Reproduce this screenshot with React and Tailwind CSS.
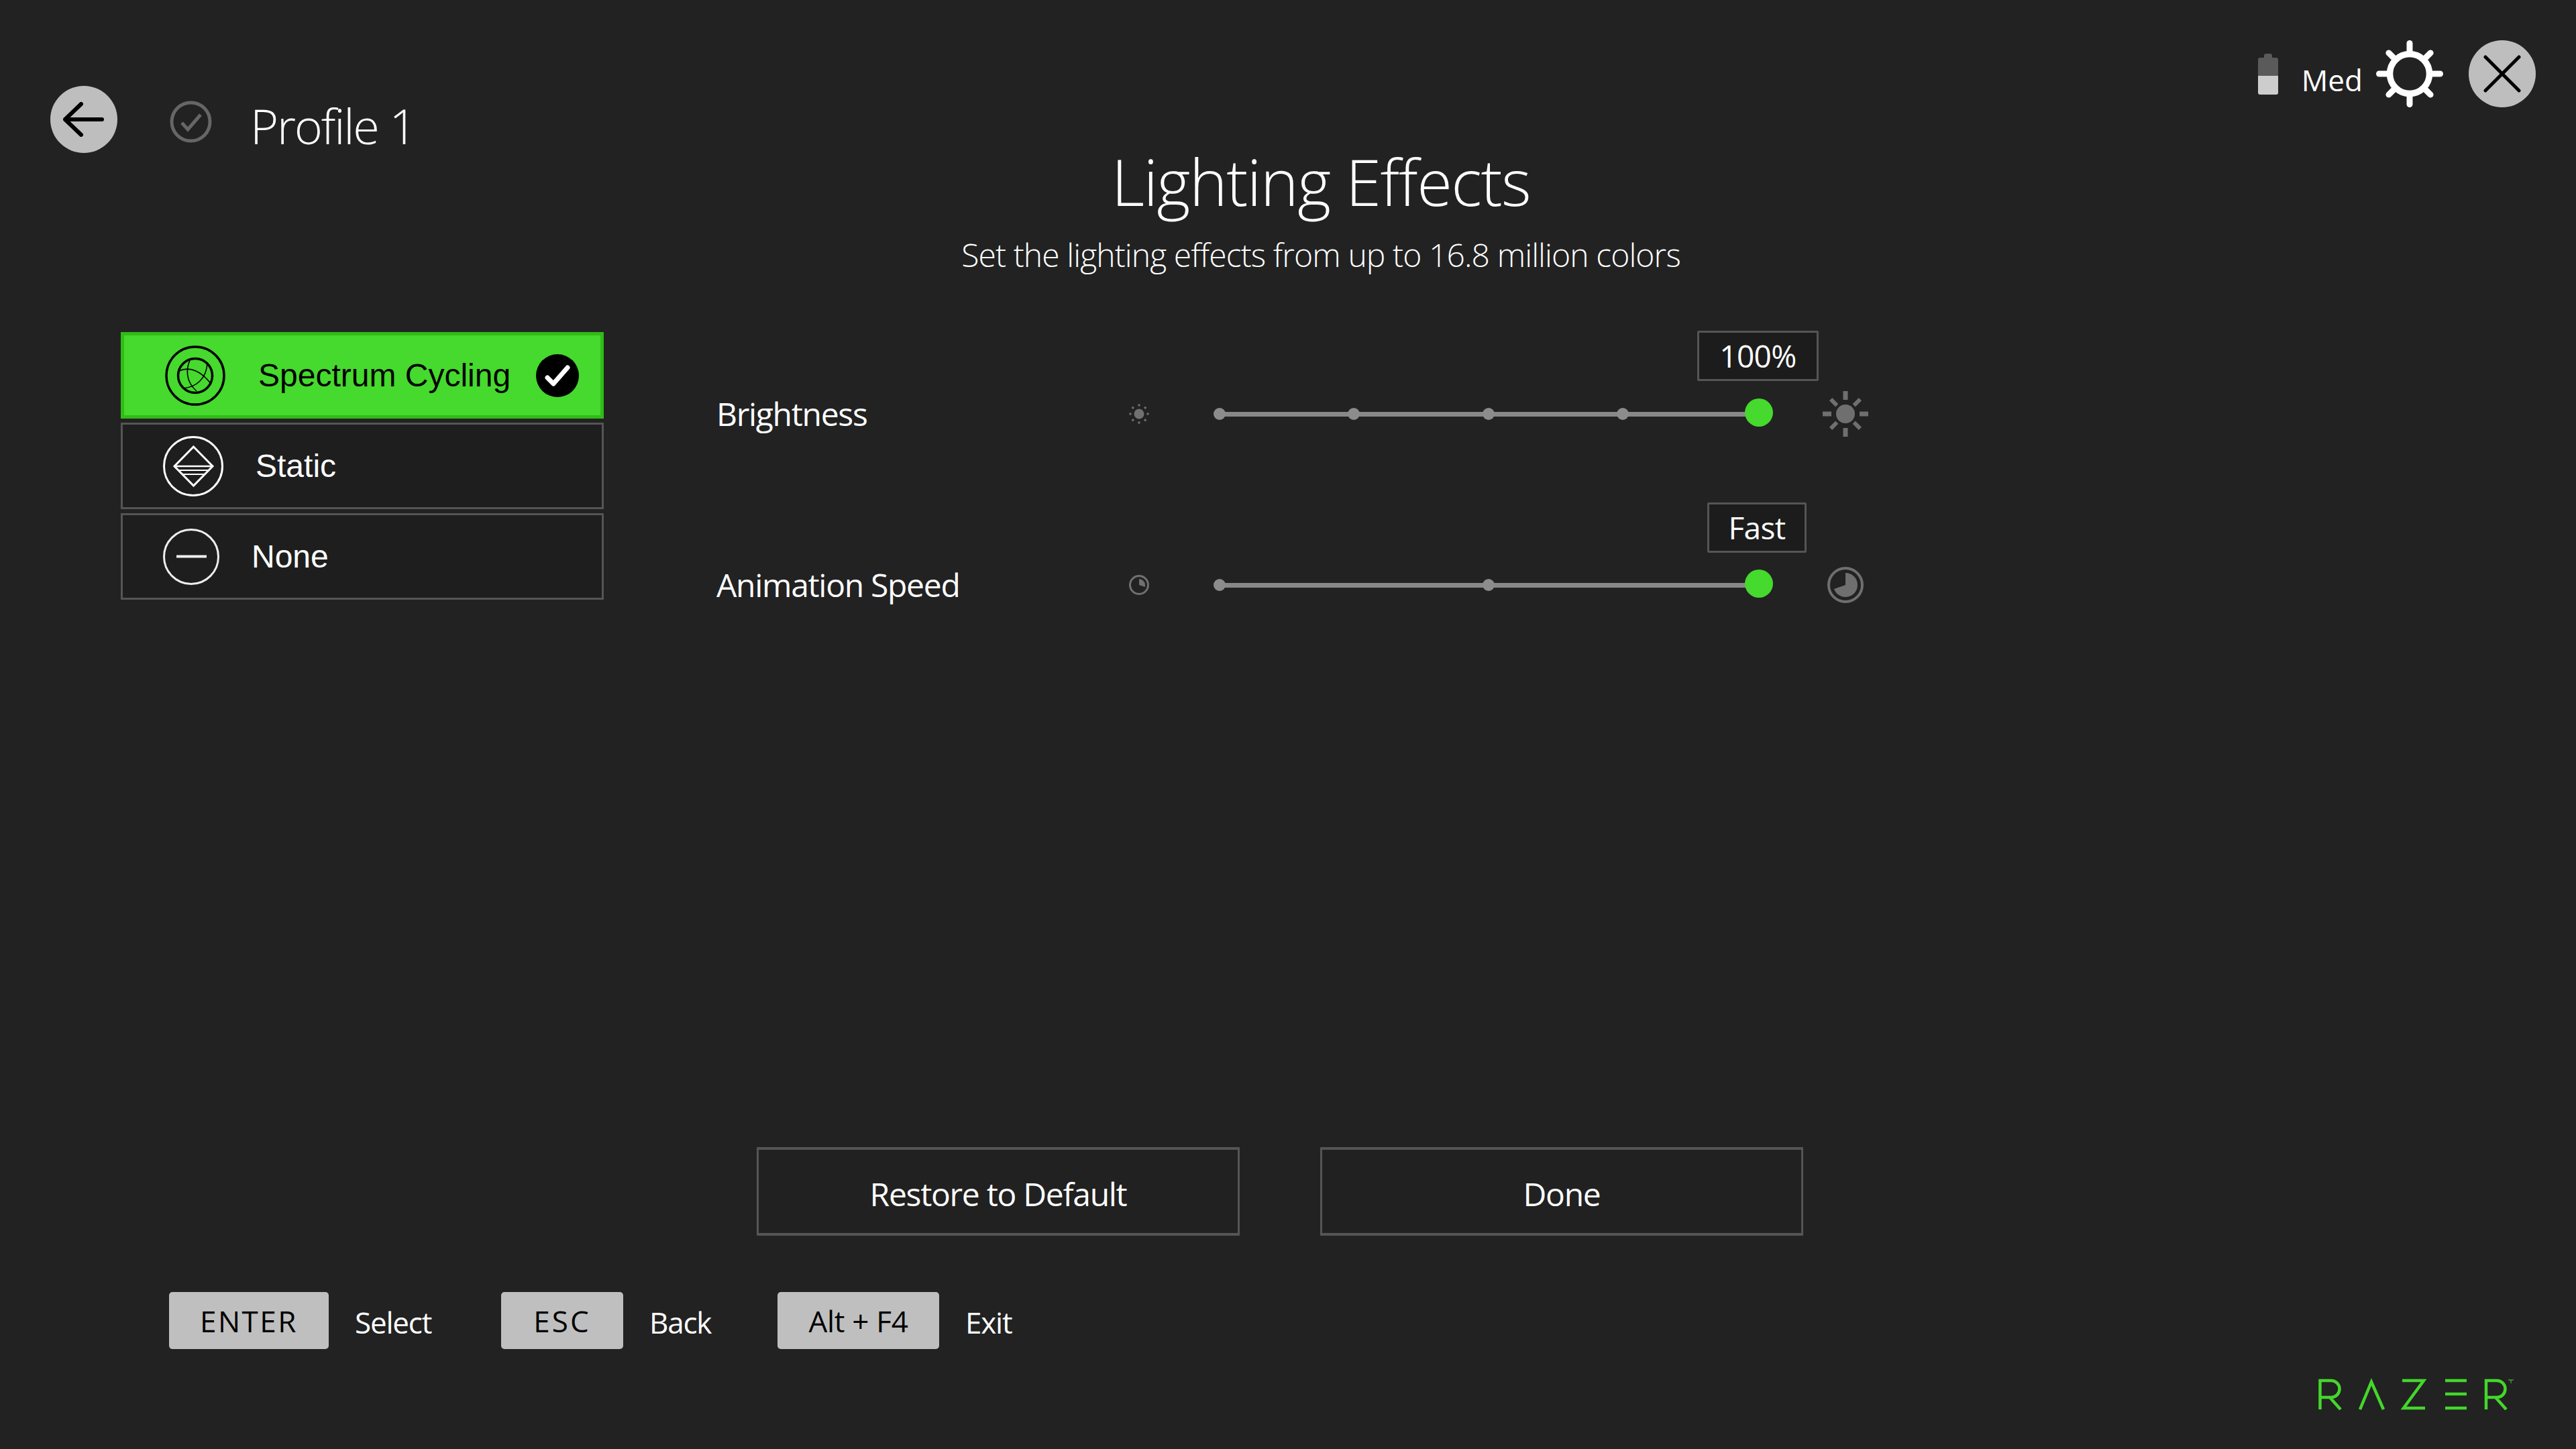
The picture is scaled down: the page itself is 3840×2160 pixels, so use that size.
const SEGOE = "font-['Open_Sans',sans-serif]";

function BackIcon() {
  return (
    <div className="w-[100px] h-[100px] rounded-full bg-[#bebebe] flex items-center justify-center">
      <svg width="62" height="52" viewBox="0 0 62 52" fill="none" stroke="#000" strokeWidth="6" strokeLinecap="round" strokeLinejoin="round">
        <path d="M3 26H58M27 3L3 26L27 49" />
      </svg>
    </div>
  );
}

function ProfileCheck() {
  return (
    <svg width="63" height="63" viewBox="0 0 63 63" fill="none">
      <circle cx="31.5" cy="31.5" r="28.5" stroke="#666" strokeWidth="5" />
      <path d="M18 33L27 43L46 21" stroke="#666" strokeWidth="5" />
    </svg>
  );
}

function Battery() {
  return (
    <svg width="30" height="61" viewBox="0 0 30 61">
      <path d="M9 6V3a3 3 0 0 1 3-3h6a3 3 0 0 1 3 3v3h6a3 3 0 0 1 3 3v24H0V9a3 3 0 0 1 3-3z" fill="#5a5a5a" />
      <path d="M0 33h30v25a3 3 0 0 1-3 3H3a3 3 0 0 1-3-3z" fill="#cdcdcd" />
    </svg>
  );
}

function Gear() {
  const rays = [0, 45, 90, 135, 180, 225, 270, 315];
  return (
    <svg width="100" height="100" viewBox="0 0 100 100" fill="none" stroke="#fff">
      <circle cx="50" cy="50" r="29.5" strokeWidth="9.500" />
      {rays.map((a) => (
        <line key={a} x1="50" y1="20" x2="50" y2={a % 90 === 0 ? 4.500 : 6} strokeWidth="9" strokeLinecap="round" transform={`rotate(${a} 50 50)`} />
      ))}
    </svg>
  );
}

function CloseIcon() {
  return (
    <div className="w-[100px] h-[100px] rounded-full bg-[#bebebe] flex items-center justify-center">
      <svg width="56" height="56" viewBox="0 0 56 56" stroke="#000" strokeWidth="5" strokeLinecap="round">
        <path d="M3 3L53 53M53 3L3 53" />
      </svg>
    </div>
  );
}

function SpectrumIcon() {
  return (
    <svg width="90" height="90" viewBox="0 0 90 90" fill="none" stroke="#000">
      <circle cx="45" cy="45" r="43" strokeWidth="3.5" />
      <circle cx="45" cy="45" r="25.5" strokeWidth="3.5" />
      <path d="M37 22C31 36 31 54 47 68" strokeWidth="1.6" />
      <path d="M21 38C38 30 56 40 69 58" strokeWidth="1.6" />
      <path d="M27 64C46 62 62 50 63 26" strokeWidth="1.6" />
    </svg>
  );
}

function StaticIcon() {
  return (
    <svg width="90" height="90" viewBox="0 0 90 90" fill="none" stroke="#fff">
      <circle cx="45" cy="45" r="43.5" strokeWidth="3" />
      <path d="M45.5 16L74 45L45.5 74L17 45Z" strokeWidth="3" />
      <path d="M19 45H72" strokeWidth="2.5" />
      <path d="M24 51H67" strokeWidth="2" />
      <path d="M29 57H62" strokeWidth="2" />
    </svg>
  );
}

function NoneIcon() {
  return (
    <svg width="84" height="84" viewBox="0 0 84 84" fill="none" stroke="#eee">
      <circle cx="42" cy="42" r="40.5" strokeWidth="3" />
      <path d="M20 41.500H65" strokeWidth="4" />
    </svg>
  );
}

function BigCheck() {
  return (
    <div className="w-[64px] h-[64px] rounded-full bg-black flex items-center justify-center">
      <svg width="38" height="32" viewBox="0 0 38 32" fill="none" stroke="#fff" strokeWidth="7" strokeLinecap="round" strokeLinejoin="round">
        <path d="M4 19L13 28L34 4" />
      </svg>
    </div>
  );
}

function EffectRow({ active, icon, label, iconClass, textClass }) {
  const box = active
    ? "border-[5px] border-[#30bb17] bg-[#46d92e] text-black"
    : "border-[3px] border-[#555555] bg-[#1e1e1e] text-white";
  return (
    <div className={`w-[720px] h-[129px] flex items-center ${box} font-['Liberation_Sans',sans-serif] text-[48px]`}>
      <div className={iconClass}>{icon}</div>
      <span className={textClass}>{label}</span>
      {active && (
        <div className="ml-auto mr-[32px]">
          <BigCheck />
        </div>
      )}
    </div>
  );
}

function SmallSun() {
  return (
    <svg width="30" height="30" viewBox="0 0 30 30" fill="#707070">
      <ellipse cx="15" cy="15" rx="7.500" ry="7.500" />
      {[0, 45, 90, 135, 180, 225, 270, 315].map((a) => (
        <circle key={a} cx="15" cy="2" r="1.800" transform={`rotate(${a} 15 15)`} />
      ))}
    </svg>
  );
}

function BigSun() {
  return (
    <svg width="70" height="70" viewBox="0 0 70 70" fill="#6f6f6f">
      <circle cx="35" cy="35" r="14" />
      {[0, 45, 90, 135, 180, 225, 270, 315].map((a) => (
        <rect key={a} x={a % 90 === 0 ? 31.5 : 32} y={a % 90 === 0 ? 1 : 4} width={a % 90 === 0 ? 7 : 6} height="13" transform={`rotate(${a} 35 35)`} />
      ))}
    </svg>
  );
}

function SmallClock() {
  return (
    <svg width="30" height="30" viewBox="0 0 30 30" fill="none">
      <circle cx="15" cy="15" r="13.500" stroke="#707070" strokeWidth="3" />
      <path d="M15 6A9 9 0 0 1 24 15L24 18L15 15Z" fill="#707070" />
    </svg>
  );
}

function BigClock() {
  return (
    <svg width="54" height="54" viewBox="0 0 54 54" fill="none">
      <circle cx="27" cy="27" r="25" stroke="#6f6f6f" strokeWidth="4" />
      <path d="M27 9A18 18 0 1 1 10 33L27 27Z" fill="#6f6f6f" />
    </svg>
  );
}

function Slider({ stops, value }) {
  return (
    <div className="relative w-[805px] h-[42px] flex items-center">
      <div className="w-full h-[7px] bg-[#888888]" />
      {stops.map((s) => (
        <div key={s} style={{ left: s - 9 }} className="absolute top-[12px] w-[18px] h-[18px] rounded-full bg-[#8c8c8c]" />
      ))}
      <div className="absolute -right-[20px] -top-[2px] w-[42px] h-[42px] rounded-full bg-[#46d92e]" />
      {value}
    </div>
  );
}

function Chip({ children, className }) {
  return (
    <div className={`absolute h-[75px] flex items-center justify-center bg-[#1c1c1c] border-[3px] border-[#555555] rounded-[2px] text-[46px] font-[380] tracking-[-0.6px] text-white ${className}`}>
      {children}
    </div>
  );
}

function SliderRow({ label, small, big, stops, chip }) {
  return (
    <div className="flex items-center h-[42px]">
      <span className="w-[615px] text-[48px] font-[380] tracking-[-1.3px] text-white">{label}</span>
      <div className="w-[30px] flex justify-center">{small}</div>
      <div className="ml-[105px]">
        <Slider stops={stops} value={chip} />
      </div>
      <div className="ml-[93px] w-[70px] flex justify-center">{big}</div>
    </div>
  );
}

function ActionButton({ children }) {
  return (
    <button className="w-[720px] h-[132px] pt-[8px] border-y-4 border-x-[3px] border-[#555555] bg-[#212121] text-[48px] font-[380] tracking-[-1.3px] text-white">
      {children}
    </button>
  );
}

function Key({ children, label, keyClass, boxClass }) {
  return (
    <div className={`flex items-center ${boxClass}`}>
      <kbd className={`${keyClass} h-[85px] rounded-[5px] bg-[#bfbfbf] flex items-center justify-center text-[44px] font-[380] text-black ${SEGOE}`}>
        {children}
      </kbd>
      <span className="ml-[39px] mt-[5px] text-[44px] font-[380] tracking-[-1.2px] text-white">{label}</span>
    </div>
  );
}

function RazerLogo() {
  return (
    <svg width="292" height="48" viewBox="0 0 292 48" fill="none" stroke="#44d62c" strokeWidth="4.500">
      <path d="M2.500 47V4H19a12 12 0 0 1 0 25H2.500M17 29L33 47" />
      <path d="M62 47L79 6L97 47" />
      <path d="M125 4H157L127 45H159" />
      <path d="M189 4H221M189 24H221M189 45H221" />
      <path d="M250 47V4H266a12 12 0 0 1 0 25H250M264 29L280 47" />
      <path d="M283 3H291M287 3V8" strokeWidth="1" />
    </svg>
  );
}

export default function App() {
  return (
    <div className={`relative w-[3840px] h-[2160px] overflow-hidden bg-[#222222] text-white font-light ${SEGOE}`}>
      <header className="flex justify-between items-start h-[228px] pl-[75px] pr-[60px] pt-[60px]">
        <div className="flex items-center mt-[68px]">
          <BackIcon />
          <div className="ml-[78px] mt-[6px]">
            <ProfileCheck />
          </div>
          <span className="ml-[57px] mt-[18px] text-[72px] leading-none tracking-[-2.2px]">Profile 1</span>
        </div>
        <div className="flex items-center">
          <Battery />
          <span className="ml-[35px] mr-[20px] mt-[18px] text-[44px] font-[380]">Med</span>
          <Gear />
          <div className="ml-[38px]">
            <CloseIcon />
          </div>
        </div>
      </header>

      <div className="flex flex-col items-center pl-[98px] -mt-[18px]">
        <h1 className="text-[96px] leading-[120px] tracking-[-1.5px]">Lighting Effects</h1>
        <p className="mt-[20px] text-[48px] leading-[60px] tracking-[-0.9px]">Set the lighting effects from up to 16.8 million colors</p>
      </div>

      <main className="flex pl-[180px] mt-[85px]">
        <div className="flex flex-col gap-[6px]">
          <EffectRow active icon={<SpectrumIcon />} label="Spectrum Cycling" iconClass="ml-[61px]" textClass="ml-[49px]" />
          <EffectRow icon={<StaticIcon />} label="Static" iconClass="ml-[60px]" textClass="ml-[48px]" />
          <EffectRow icon={<NoneIcon />} label="None" iconClass="ml-[60px]" textClass="ml-[48px]" />
        </div>
        <div className="ml-[168px] pt-[101px] flex flex-col gap-[213px]">
          <SliderRow
            label="Brightness"
            small={<SmallSun />}
            big={<BigSun />}
            stops={[0, 200, 401, 601]}
            chip={<Chip className="left-[712px] -top-[103px] w-[181px]">100%</Chip>}
          />
          <SliderRow
            label="Animation Speed"
            small={<SmallClock />}
            big={<BigClock />}
            stops={[0, 401]}
            chip={<Chip className="left-[727px] -top-[102px] w-[148px]">Fast</Chip>}
          />
        </div>
      </main>

      <div className="flex pl-[1128px] gap-[120px] mt-[816px]">
        <ActionButton>Restore to Default</ActionButton>
        <ActionButton>Done</ActionButton>
      </div>

      <footer className="flex items-start pl-[252px] mt-[84px]">
        <Key label="Select" keyClass="w-[238px] tracking-[2.5px]" boxClass="w-[495px]">ENTER</Key>
        <Key label="Back" keyClass="w-[182px] tracking-[3px]" boxClass="w-[412px]">ESC</Key>
        <Key label="Exit" keyClass="w-[241px] tracking-[-0.3px]" boxClass="w-[400px]">Alt + F4</Key>
        <div className="ml-auto mr-[92px] mt-[128px]">
          <RazerLogo />
        </div>
      </footer>
    </div>
  );
}
